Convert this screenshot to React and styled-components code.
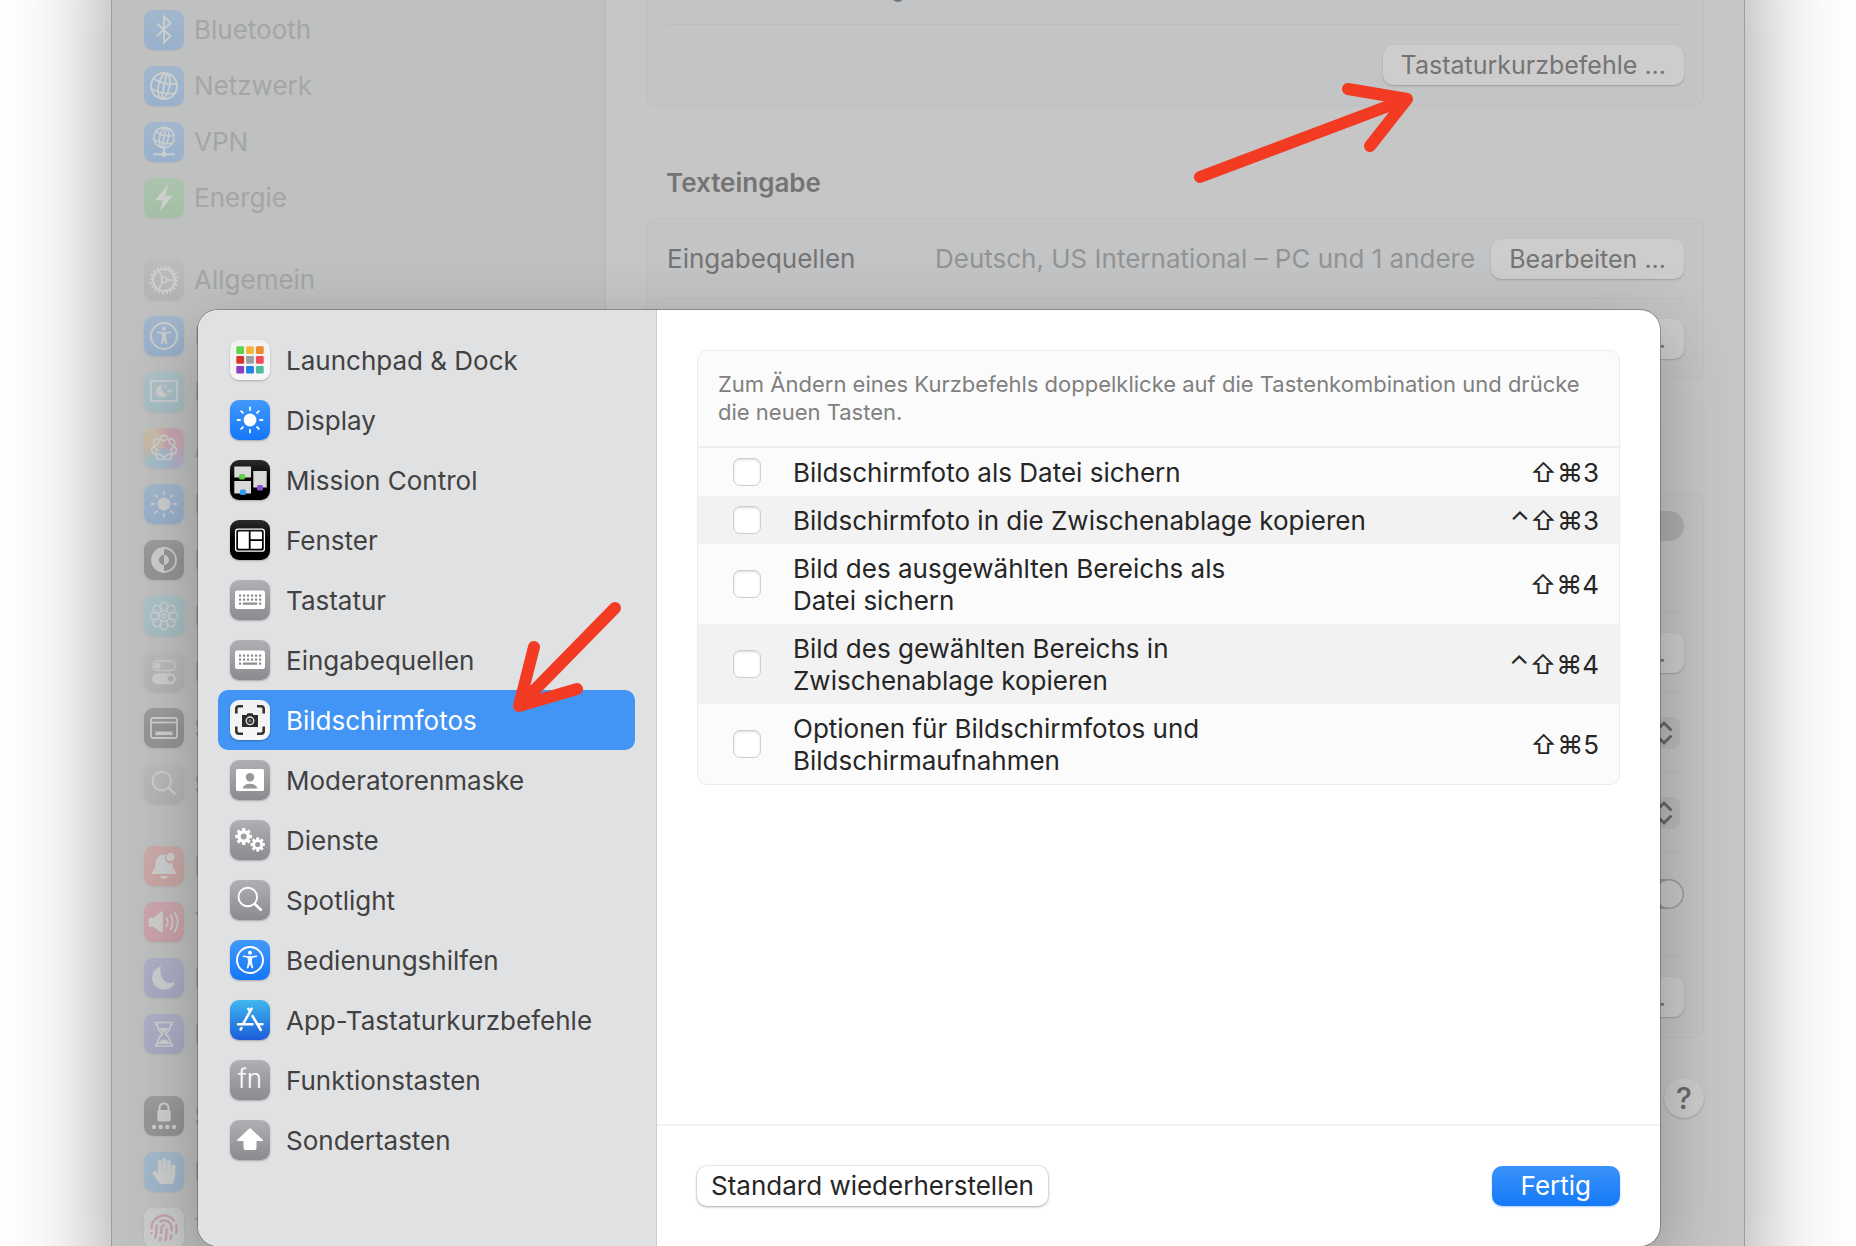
import React from "react";
import styled, { createGlobalStyle } from "styled-components";
import { Fingerprint } from "lucide-react";
import { FaHandPaper } from "react-icons/fa";

const spokes = (n) => Array.from({ length: n }, (_, i) => (i * 360) / n);

const Gear = ({ x, y, r }) => (
  <g transform={`translate(${x} ${y})`} fill="#fff">
    {spokes(8).map((a) => (
      <rect
        key={a}
        x={-r * 0.2}
        y={-r}
        width={r * 0.4}
        height={r * 0.5}
        rx="0.6"
        transform={`rotate(${a})`}
      />
    ))}
    <circle r={r * 0.55} fill="none" stroke="#fff" strokeWidth={r * 0.38} />
  </g>
);

const Globe = ({ x = 20, y = 20, r = 14 }) => (
  <g
    transform={`translate(${x} ${y}) scale(${r / 14}) rotate(12)`}
    fill="none"
    stroke="#fff"
    strokeWidth="1.8"
  >
    <circle r="13" />
    <ellipse rx="5.5" ry="13" />
    <path d="M0-13V13M-12-5Q0 0 12-5M-12.500 5Q0 9 12.500 5" />
  </g>
);

const Sun = () => (
  <g stroke="#fff" strokeWidth="1.8" strokeLinecap="round">
    <circle cx="20" cy="20" r="6.400" fill="#fff" stroke="none" />
    {spokes(8).map((a) => (
      <path key={a} d="M20 7.500V10" transform={`rotate(${a} 20 20)`} />
    ))}
  </g>
);

const Person = () => (
  <g fill="none" stroke="#fff" strokeWidth="1.9" strokeLinecap="round">
    <circle cx="20" cy="20" r="13" />
    <circle cx="20" cy="12.800" r="2" fill="#fff" stroke="none" />
    <path d="M13.500 16.300L18.500 17H21.500L26.500 16.300" strokeWidth="1.500" />
    <path d="M18.200 17H21.800L21.500 22L22.800 28H22L20 23L18 28H17.200L18.500 22Z" fill="#fff" strokeWidth="0.8" />
  </g>
);

const Keys = () => (
  <g>
    <rect x="5" y="10.500" width="30" height="18.500" rx="2.200" fill="#fff" />
    <g fill="#8d8d92">
      {[14.5, 18.5].map((y) =>
        [9, 13, 17, 21, 25, 29].map((x) => (
          <rect key={`${x}-${y}`} x={x} y={y} width="2.200" height="2.200" />
        ))
      )}
      <path d="M9 22.500h2.200v2.200h-2.200zM13 22.500h14.200v2.200h-14.200zM29 22.500h2.200v2.200h-2.200z" />
    </g>
  </g>
);

const Lens = () => (
  <g fill="none" stroke="#fff" strokeLinecap="round">
    <circle cx="17.800" cy="17" r="9.300" strokeWidth="1.900" />
    <path d="M24.800 24L30.800 29.800" strokeWidth="2.600" />
  </g>
);

// seven interlaced petals, closed after two turns
const Rosette = () => {
  const points = Array.from({ length: 141 }, (_, i) => {
    const t = (i / 140) * Math.PI * 4;
    const r = 10 + 2.6 * Math.cos((7 * t) / 2);
    return `${(20 + r * Math.sin(t)).toFixed(2)},${(20 - r * Math.cos(t)).toFixed(2)}`;
  });
  return <polyline points={points.join(" ")} fill="none" stroke="#fff" strokeWidth="1.700" />;
};

const Launchpad = () => {
  const colors = [
    "#61d24c", "#f6b63a", "#ec8a2c",
    "#d5382a", "#98a0a4", "#f3475c",
    "#8a40c0", "#1d82e4", "#4cbc9c",
  ];
  return (
    <g>
      {colors.map((c, i) => (
        <rect
          key={c}
          x={6.3 + (i % 3) * 9.8}
          y={6.3 + Math.floor(i / 3) * 9.8}
          width="7.800"
          height="7.600"
          rx="1.200"
          fill={c}
        />
      ))}
    </g>
  );
};

const glyphs = {
  launchpad: <Launchpad />,
  sun: <Sun />,
  mission: (
    <g>
      <path d="M4.300 6.500H21V17.500H4.300zM4.300 21H21V33.500H4.300zM23.300 11H36.700V27.500H23.300z" fill="#d9d9d9" />
      <rect x="9" y="14" width="6" height="5.500" rx="1.500" fill="#5fd14b" />
      <rect x="10" y="29.500" width="6" height="5.500" rx="1.500" fill="#2f9bea" />
      <rect x="27" y="25" width="6" height="5.500" rx="1.500" fill="#8e4fd0" />
    </g>
  ),
  windows: (
    <g fill="#fff">
      <rect x="5.600" y="9.200" width="28.800" height="22" rx="2.500" fill="none" stroke="#fff" strokeWidth="1.300" />
      <path d="M9.200 11.500H18.800V28.800H9.200Q8 28.800 8 27.600V12.700Q8 11.500 9.200 11.500z" />
      <path d="M20.600 11.500H30.800Q32 11.500 32 12.700V19.200H20.600zM20.600 21H32V27.600Q32 28.800 30.800 28.800H20.600z" />
    </g>
  ),
  keyboard: <Keys />,
  capture: (
    <g>
      <path
        d="M6.300 13.500V9Q6.300 6.300 9 6.300H13M27 6.300H31Q33.700 6.300 33.700 9V13.500M33.700 26.500V31Q33.700 33.700 31 33.700H27M13 33.700H9Q6.300 33.700 6.300 31V26.500"
        fill="none"
        stroke="#333"
        strokeWidth="2.600"
      />
      <path d="M12 15H16.500L17.500 13.300H22.500L23.500 15H28V27H12z" fill="#2c2c2c" />
      <circle cx="20" cy="20.800" r="3.800" fill="#333" stroke="#e4e4e4" strokeWidth="1.300" />
      <circle cx="20" cy="20.800" r="1.500" fill="#777" />
    </g>
  ),
  presenter: (
    <g>
      <rect x="6" y="9" width="28" height="22" rx="1.500" fill="#fff" />
      <g fill="#96969b">
        <circle cx="20" cy="17.300" r="4.200" />
        <path d="M12.500 28.600Q14 23.800 20 23.800T27.500 28.600z" />
      </g>
    </g>
  ),
  gears: (
    <g>
      <Gear x={13.7} y={16.5} r={8.4} />
      <Gear x={27.7} y={24.5} r={7.2} />
    </g>
  ),
  search: <Lens />,
  person: <Person />,
  store: (
    <g fill="none" stroke="#fff" strokeWidth="2.500" strokeLinecap="round">
      <path d="M21.700 8.700L13.300 23.500M18.300 8.700L20 11.500M22.500 16L30.800 30M8 24.300H22.500M28.500 24.300H32.500M11.500 28L10.600 29.500" />
    </g>
  ),
  shift: <path d="M19 8.700Q20 7.800 21 8.700L32.700 19.700Q33.500 21 32 21H26.500V28Q26.500 30 24.500 30H15.500Q13.500 30 13.500 28V21H8Q6.500 21 7.300 19.700z" fill="#fff" />,
  bluetooth: <path d="M13 13.500L26.500 26L20 32.500V6.500L26.500 13L13 26" fill="none" stroke="#fff" strokeWidth="1.800" />,
  globe: <Globe />,
  vpn: (
    <g>
      <Globe y={15.5} r={11} />
      <path d="M20 26V32M9 32.300H31" stroke="#fff" strokeWidth="1.800" />
      <circle cx="20" cy="32.300" r="2.600" fill="#fff" />
    </g>
  ),
  bolt: <path d="M24 6.500L11.800 21.500Q11.500 22.300 12.500 22.300H18.800L15.800 33.500L28.300 18.500Q28.500 17.700 27.800 17.700H21.500z" fill="#fff" />,
  general: (
    <g fill="none" stroke="#fff">
      <circle cx="20" cy="20" r="11" strokeWidth="2" />
      <circle cx="20" cy="20" r="13" strokeWidth="2.400" strokeDasharray="2 2.080" />
      <circle cx="20" cy="20" r="2.800" strokeWidth="1.600" />
      <path d="M23 20H31M18.500 17.500L14.500 10.500M18.500 22.500L14.500 29.500" strokeWidth="1.600" />
    </g>
  ),
  saver: (
    <g>
      <rect x="7" y="9" width="26" height="20" fill="none" stroke="#fff" strokeWidth="1.800" />
      <path d="M18 13.500A5.800 5.800 0 1 0 23 22A6 6 0 0 1 18 13.500z" fill="#fff" />
      <path d="M26 16.500V22M23.300 19.200H28.700M21 13V16M19.500 14.500H22.500" stroke="#fff" strokeWidth="1.200" />
    </g>
  ),
  siri: <Rosette />,
  contrast: (
    <g>
      <circle cx="20" cy="20" r="12" fill="none" stroke="#fff" strokeWidth="1.800" />
      <path d="M20 8A12 12 0 0 0 20 32V25A5 5 0 0 1 20 15z" fill="#fff" />
      <path d="M20 15A5 5 0 0 1 20 25z" fill="#fff" />
    </g>
  ),
  flower: (
    <g fill="none" stroke="#fff" strokeWidth="1.500">
      {spokes(8).map((a) => (
        <ellipse key={a} cx="20" cy="10.500" rx="3.700" ry="4.300" transform={`rotate(${a} 20 20)`} />
      ))}
      <circle cx="20" cy="20" r="5.500" />
      <circle cx="20" cy="20" r="2" />
    </g>
  ),
  toggles: (
    <g fill="none" stroke="#fff" strokeWidth="1.600">
      <rect x="9" y="9" width="22" height="9.500" rx="4.700" />
      <circle cx="13.700" cy="13.700" r="3" fill="#fff" stroke="none" />
      <rect x="9" y="22" width="22" height="9.500" rx="4.700" fill="#fff" />
      <circle cx="26.500" cy="26.700" r="3" fill="#888" stroke="none" />
    </g>
  ),
  dock: (
    <g fill="none" stroke="#fff" strokeWidth="1.800">
      <rect x="7" y="10" width="26" height="20" rx="2" />
      <path d="M7 14.500H33" />
      <path d="M11.500 25.300H28.500" strokeWidth="3.600" />
    </g>
  ),
  bell: (
    <g fill="#fff">
      <path d="M22 8.500A5.500 5.500 0 0 0 28.500 17Q28.500 22.500 32 26.500V28H8V26.500Q11.500 22.500 11.500 17.500Q11.500 8 22 8.500z" />
      <circle cx="26.500" cy="11" r="4.300" />
      <path d="M16 30H24Q23 33 20 33T16 30z" />
    </g>
  ),
  sound: (
    <g fill="none" stroke="#fff" strokeWidth="1.700" strokeLinecap="round">
      <path d="M5.500 16.500H10L18 10V30L10 24H5.500z" fill="#fff" strokeLinejoin="round" />
      <path d="M22.500 16Q25 20 22.500 24.500M26.500 13Q31 20 26.500 27.500M30.500 10.500Q37 20 30.500 30" />
    </g>
  ),
  moon: <path d="M17 8.500A11.800 11.800 0 1 0 31 24Q22 27 18.200 20Q15 14 17 8.500z" fill="#fff" />,
  hourglass: (
    <g fill="none" stroke="#fff" strokeWidth="1.700">
      <path d="M12 8.500H28V10.500H26.500Q27 15 21.500 20Q27 25 26.500 30H28V32H12V30H13.500Q13 25 18.500 20Q13 15 13.500 10.500H12z" />
      <path d="M15 14H25L20 19zM14 30Q16 26 20 25.500T26 30z" fill="#fff" stroke="none" />
    </g>
  ),
  lock: (
    <g fill="#fff">
      <path d="M15.500 15V12Q15.500 7.500 20 7.500T24.500 12V15" fill="none" stroke="#fff" strokeWidth="2" />
      <rect x="13.300" y="14" width="13.400" height="11.500" rx="1.800" />
      {[10, 16.700, 23.400, 30].map((x) => (
        <circle key={x} cx={x} cy="31" r="2.200" />
      ))}
    </g>
  ),
  hand: <FaHandPaper x="7" y="6" size="26" color="#fff" />,
  touch: <Fingerprint x="5" y="5" size="30" color="#e0245e" strokeWidth={1.8} />,
};

const tones = {
  blue: "linear-gradient(#4199fb, #1477f8)",
  gray: "linear-gradient(#b0b0b4, #8a8a8f)",
  black: "linear-gradient(#2b2b2b, #000 50%)",
  white: "linear-gradient(#f0f0f1, #f8f8f8)",
  store: "linear-gradient(#3fb8ef, #1b5cd9)",
  green: "linear-gradient(#6cd06c, #4cb850)",
  cyan: "linear-gradient(#6cc8e8, #52b6d8)",
  red: "linear-gradient(#f8605a, #ee4a40)",
  pink: "linear-gradient(#fa5070, #f03858)",
  indigo: "linear-gradient(#7a78e0, #605cd0)",
  sky: "linear-gradient(#4aa4fa, #3a90f0)",
  siri: "conic-gradient(from 20deg, #f0407c, #f0508c, #b070e8, #48a8f0, #50b8e8, #f09848, #f0b060, #f0407c)",
};

const systemGroups = [
  [
    ["Bluetooth", "bluetooth", "blue"],
    ["Netzwerk", "globe", "blue"],
    ["VPN", "vpn", "blue"],
    ["Energie", "bolt", "green"],
  ],
  [
    ["Allgemein", "general", "gray"],
    ["Bedienungshilfen", "person", "blue"],
    ["Bildschirmschoner", "saver", "cyan"],
    ["Apple Intelligence & Siri", "siri", "siri"],
    ["Displays", "sun", "blue"],
    ["Erscheinungsbild", "contrast", "black"],
    ["Hintergrundbild", "flower", "cyan"],
    ["Kontrollzentrum", "toggles", "gray"],
    ["Schreibtisch & Dock", "dock", "black"],
    ["Spotlight", "search", "gray"],
  ],
  [
    ["Mitteilungen", "bell", "red"],
    ["Ton", "sound", "pink"],
    ["Fokus", "moon", "indigo"],
    ["Bildschirmzeit", "hourglass", "indigo"],
  ],
  [
    ["Sperrbildschirm", "lock", "black"],
    ["Datenschutz & Sicherheit", "hand", "sky"],
    ["Touch ID & Passwort", "touch", "white"],
  ],
];

const categories = [
  ["Launchpad & Dock", "launchpad", "white"],
  ["Display", "sun", "blue"],
  ["Mission Control", "mission", "black"],
  ["Fenster", "windows", "black"],
  ["Tastatur", "keyboard", "gray"],
  ["Eingabequellen", "keyboard", "gray"],
  ["Bildschirmfotos", "capture", "white"],
  ["Moderatorenmaske", "presenter", "gray"],
  ["Dienste", "gears", "gray"],
  ["Spotlight", "search", "gray"],
  ["Bedienungshilfen", "person", "blue"],
  ["App-Tastaturkurzbefehle", "store", "store"],
  ["Funktionstasten", "fn", "gray"],
  ["Sondertasten", "shift", "gray"],
];

const shortcuts = [
  { id: "file", lines: ["Bildschirmfoto als Datei sichern"], keys: "⇧⌘3" },
  { id: "clip", lines: ["Bildschirmfoto in die Zwischenablage kopieren"], keys: "⌃⇧⌘3" },
  { id: "area-file", lines: ["Bild des ausgewählten Bereichs als", "Datei sichern"], keys: "⇧⌘4" },
  { id: "area-clip", lines: ["Bild des gewählten Bereichs in", "Zwischenablage kopieren"], keys: "⌃⇧⌘4" },
  { id: "options", lines: ["Optionen für Bildschirmfotos und", "Bildschirmaufnahmen"], keys: "⇧⌘5" },
];

const AppIcon = ({ glyph, tone }) => (
  <Tile $tone={tone}>
    {glyph === "fn" ? (
      "fn"
    ) : (
      <svg width="40" height="40" viewBox="0 0 40 40" aria-hidden="true">
        {glyphs[glyph]}
      </svg>
    )}
  </Tile>
);

const Stepper = ({ label, value }) => (
  <Picker>
    <select aria-label={label} defaultValue={value}>
      <option>{value}</option>
    </select>
    <svg width="32" height="32" viewBox="0 0 32 32" aria-hidden="true">
      <path
        d="M9.500 12.500L16 6L22.500 12.500M9.500 19.500L16 26L22.500 19.500"
        fill="none"
        stroke="#69696a"
        strokeWidth="3"
        strokeLinecap="round"
      />
    </svg>
  </Picker>
);

function KeyboardSettings() {
  return (
    <Main>
      <Card $open>
        <Row $size={105} $align="flex-end">
          <Hint>Fokus mit der Ordnung</Hint>
        </Row>
        <Row>
          <DimButton>Tastaturkurzbefehle ...</DimButton>
        </Row>
      </Card>
      <Heading>Texteingabe</Heading>
      <Card>
        <Row>
          <Label>Eingabequellen</Label>
          <Value>Deutsch, US International – PC und 1 andere</Value>
          <DimButton>Bearbeiten ...</DimButton>
        </Row>
        <Row>
          <DimButton>Textersetzungen ...</DimButton>
        </Row>
      </Card>
      <Heading>Diktat</Heading>
      <Card>
        <Row $size={120} $align="flex-start">
          <Switch type="checkbox" aria-label="Diktierfunktion" />
        </Row>
        <Row>
          <DimButton>Bearbeiten ...</DimButton>
        </Row>
        <Row>
          <Stepper label="Mikrofonquelle" value="Automatisch" />
        </Row>
        <Row>
          <Stepper label="Kurzbefehl" value="Mikrofontaste" />
        </Row>
        <Row $size={104} $align="flex-start">
          <Switch type="checkbox" aria-label="Automatische Zeichensetzung" $on />
        </Row>
        <Row>
          <DimButton>Über Diktieren &amp; Datenschutz ...</DimButton>
        </Row>
      </Card>
      <Help aria-label="Hilfe">?</Help>
    </Main>
  );
}

function ShortcutSheet() {
  return (
    <Sheet role="dialog" aria-label="Tastaturkurzbefehle">
      <Categories>
        {categories.map(([name, glyph, tone]) => (
          <Category key={name} $active={name === "Bildschirmfotos"}>
            <AppIcon glyph={glyph} tone={tone} />
            <CategoryName>{name}</CategoryName>
          </Category>
        ))}
      </Categories>
      <Panel>
        <Content>
          <List>
            <Info>
              Zum Ändern eines Kurzbefehls doppelklicke auf die Tastenkombination und drücke
              die neuen Tasten.
            </Info>
            <Table>
              <tbody>
                {shortcuts.map(({ id, lines, keys }) => (
                  <tr key={id}>
                    <CheckCell>
                      <Check type="checkbox" id={id} />
                    </CheckCell>
                    <NameCell>
                      <label htmlFor={id}>
                        {lines[0]}
                        {lines[1] && <br />}
                        {lines[1]}
                      </label>
                    </NameCell>
                    <KeyCell>{keys}</KeyCell>
                  </tr>
                ))}
              </tbody>
            </Table>
          </List>
        </Content>
        <Footer>
          <PlainButton>Standard wiederherstellen</PlainButton>
          <PrimaryButton>Fertig</PrimaryButton>
        </Footer>
      </Panel>
      <SidebarArrow width="120" height="120" viewBox="0 0 120 120" aria-hidden="true">
        <path d="M105 8L9 106M24 47L9 106L67 89" />
      </SidebarArrow>
    </Sheet>
  );
}

export default function App() {
  return (
    <Desktop>
      <GlobalStyle />
      <Window>
        <Sidebar>
          {systemGroups.map((group) => (
            <Group key={group[0][0]}>
              {group.map(([name, glyph, tone]) => (
                <SystemItem key={name}>
                  <AppIcon glyph={glyph} tone={tone} />
                  <span>{name}</span>
                </SystemItem>
              ))}
            </Group>
          ))}
        </Sidebar>
        <KeyboardSettings />
        <ButtonArrow width="230" height="110" viewBox="0 0 230 110" aria-hidden="true">
          <path d="M10 97L217 19M158 9L217 19L180 66" />
        </ButtonArrow>
        <ShortcutSheet />
      </Window>
    </Desktop>
  );
}

const GlobalStyle = createGlobalStyle`
  * {
    box-sizing: border-box;
  }
  body {
    margin: 0;
    background: white;
    font-family: Inter, "Liberation Sans", sans-serif;
    font-size: 26px;
    line-height: 32px;
    color: #262626;
  }
  button, select {
    font: inherit;
  }
  svg {
    display: block;
  }
`;

const Desktop = styled.div`
  display: flex;
  height: 100vh;
  padding: 0 111px;
  overflow: hidden;
`;

// runs past the top and the bottom edge of the screen
const Window = styled.div`
  position: relative;
  flex: 1;
  display: flex;
  height: calc(100vh + 160px);
  margin: -80px 0;
  background: #c5c6c5;
  box-shadow: inset 0 0 0 1px #9c9e9d, 0 0 96px rgba(0, 0, 0, 0.4);
`;

const Sidebar = styled.nav`
  width: 495px;
  flex-shrink: 0;
  padding: 82px 32px 0;
  background: #bfc1c0;
  border-left: 1px solid #9c9e9d;
  border-right: 1px solid #b6b8b7;
`;

const Group = styled.div`
  margin-bottom: 26px;
`;

const Tile = styled.div`
  width: 40px;
  height: 40px;
  flex-shrink: 0;
  border-radius: 9px;
  background: ${(props) => tones[props.$tone]};
  box-shadow: 0 1px 2px rgba(0, 0, 0, 0.25);
  color: white;
  font-weight: 300;
  line-height: 38px;
  text-align: center;
`;

const SystemItem = styled.div`
  display: flex;
  align-items: center;
  gap: 10px;
  height: 56px;
  color: #a4a6a5;
  white-space: nowrap;

  ${Tile} {
    opacity: 0.22;
  }
`;

const Main = styled.main`
  flex: 1;
  display: flex;
  flex-direction: column;
  padding: 0 41px 0 40px;
  color: #747475;
`;

const Card = styled.section`
  background: #c3c4c6;
  border: 1px solid #bebfc0;
  border-top-width: ${(props) => (props.$open ? 0 : 1)}px;
  border-radius: ${(props) => (props.$open ? "0 0 10px 10px" : "10px")};
  padding: 0 19px 0 20px;
`;

const Row = styled.div`
  display: flex;
  align-items: ${(props) => props.$align || "center"};
  justify-content: flex-end;
  gap: 16px;
  height: ${(props) => props.$size || 80}px;
  border-bottom: 1px solid #bbbcbe;

  &:last-child {
    border-bottom: 0;
  }
`;

const Heading = styled.h2`
  margin: 61px 20px 19px;
  font-size: 26px;
  line-height: 32px;
  font-weight: 600;
`;

const Label = styled.span`
  margin-right: auto;
`;

const Value = styled.span`
  color: #929493;
`;

const Hint = styled.span`
  margin: 0 auto 21px 0;
  font-size: 22px;
  line-height: 28px;
`;

const DimButton = styled.button`
  height: 40px;
  padding: 0 18px;
  border: 0;
  border-radius: 10px;
  background: #cdcdcd;
  color: #747475;
  font-size: 25px;
  line-height: 36px;
  box-shadow: 0 1px 2px rgba(0, 0, 0, 0.2);
`;

const Switch = styled.input`
  appearance: none;
  width: 52px;
  height: 30px;
  margin: ${(props) => (props.$on ? 26 : 18)}px 0 0;
  border-radius: 15px;
  background: ${(props) =>
    props.$on ? "radial-gradient(circle at 37px 15px, #c8c9c9 13px, #999a9a 14px)" : "#adaeaf"};
`;

const Picker = styled.div`
  display: flex;
  align-items: center;
  gap: 8px;
  margin-right: 4px;

  select {
    appearance: none;
    border: 0;
    background: none;
    color: inherit;
  }
  svg {
    border-radius: 8px;
    background: #bababa;
  }
`;

const Help = styled.button`
  align-self: flex-end;
  width: 40px;
  height: 40px;
  margin-top: 40px;
  padding: 0;
  border: 0;
  border-radius: 50%;
  background: #cbcccb;
  color: #69696a;
  font-size: 30px;
  font-weight: 500;
  box-shadow: 0 1px 2px rgba(0, 0, 0, 0.2);
`;

const Sheet = styled.div`
  position: absolute;
  top: 390px;
  left: 87px;
  right: 85px;
  display: flex;
  border-radius: 20px;
  background: white;
  box-shadow: 0 0 0 1px rgba(0, 0, 0, 0.25), 0 24px 72px rgba(0, 0, 0, 0.28);
`;

const Categories = styled.nav`
  width: 459px;
  flex-shrink: 0;
  padding: 20px 21px 76px 20px;
  border-right: 1px solid #cdced0;
  border-radius: 20px 0 0 20px;
  background: #e0e1e3;
`;

const Category = styled.button`
  display: flex;
  align-items: center;
  gap: 16px;
  width: 100%;
  height: 60px;
  padding: 0 12px;
  border: 0;
  border-radius: 10px;
  background: ${(props) => (props.$active ? "#4295f5" : "none")};
  color: ${(props) => (props.$active ? "white" : "#414142")};
  text-align: left;
  white-space: nowrap;
`;

const CategoryName = styled.span`
  padding-top: 2px;
`;

const Panel = styled.div`
  flex: 1;
  display: flex;
  flex-direction: column;
`;

const Content = styled.div`
  flex: 1;
  padding: 40px;
`;

const List = styled.div`
  overflow: hidden;
  border: 1px solid #ececec;
  border-radius: 10px;
  background: #fbfbfb;
`;

const Info = styled.p`
  margin: 0;
  padding: 19px 20px 20px;
  border-bottom: 2px solid #efefef;
  color: #808080;
  font-size: 22px;
  line-height: 28px;
`;

const Table = styled.table`
  width: 100%;
  border-collapse: collapse;

  tr:nth-child(even) {
    background: #f2f2f2;
  }
  td {
    padding: 9px 0 7px;
  }
`;

const CheckCell = styled.td`
  width: 95px;
`;

const Check = styled.input`
  appearance: none;
  display: block;
  width: 28px;
  height: 28px;
  margin: 0 0 2px 35px;
  border: 1px solid #cfcfcf;
  border-radius: 7px;
  background: white;
  box-shadow: inset 0 1px 2px rgba(0, 0, 0, 0.15);
`;

const NameCell = styled.td`
  text-align: left;
`;

const KeyCell = styled.td`
  && {
    padding-right: 20px;
  }
  text-align: right;
`;

const Footer = styled.footer`
  display: flex;
  align-items: center;
  justify-content: space-between;
  height: 122px;
  padding: 0 40px;
  border-top: 2px solid #f3f3f3;
`;

const PlainButton = styled.button`
  height: 40px;
  padding: 0 14px;
  border: 0;
  border-radius: 10px;
  background: white;
  color: #262626;
  line-height: 38px;
  box-shadow: 0 0 0 1px rgba(0, 0, 0, 0.06), 0 1px 3px rgba(0, 0, 0, 0.3);
`;

const PrimaryButton = styled(PlainButton)`
  padding: 0 29px;
  background: linear-gradient(#3a93fa, #1479f8);
  color: white;
  box-shadow: 0 1px 2px rgba(20, 110, 240, 0.35);
`;

const Arrow = styled.svg`
  position: absolute;
  fill: none;
  stroke: #f33a22;
  stroke-width: 12;
  stroke-linecap: round;
  stroke-linejoin: round;
  pointer-events: none;
`;

const ButtonArrow = styled(Arrow)`
  top: 160px;
  right: 325px;
`;

const SidebarArrow = styled(Arrow)`
  top: 290px;
  left: 312px;
`;
